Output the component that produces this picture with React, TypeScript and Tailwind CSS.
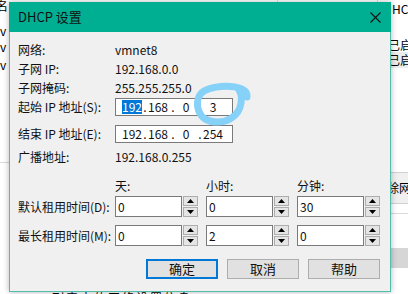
import React from "react";

function Up() {
  return (
    <svg width="7" height="4" viewBox="0 0 7 4"><path d="M0 4 L3.5 0 L7 4 Z" fill="#000" /></svg>
  );
}
function Down() {
  return (
    <svg width="7" height="4" viewBox="0 0 7 4"><path d="M0 0 L3.5 4 L7 0 Z" fill="#000" /></svg>
  );
}

function Spin({ value }: { value: string }) {
  return (
    <div className="flex w-[83px] h-[21px] gap-[1px]">
      <div className="flex-1 border border-[#7a7a7a] bg-white pl-[2px] leading-[19px]">{value}</div>
      <div className="flex flex-col w-[15px] gap-[1px]">
        <div className="flex-1 border border-[#adadad] bg-[#e5e5e5] flex items-center justify-center">
          <Up />
        </div>
        <div className="flex-1 border border-[#adadad] bg-[#e5e5e5] flex items-center justify-center">
          <Down />
        </div>
      </div>
    </div>
  );
}

function IpBox({ last, sel }: { last: string; sel?: boolean }) {
  return (
    <div className="w-[118px] h-[18px] border border-[#7a7a7a] bg-white flex items-center pl-[6px] whitespace-nowrap leading-[14px]">
      <span className={"w-[20px] text-center " + (sel ? "bg-[#0078d7] text-white" : "")}>192</span>
      <span className="w-[6px] text-center">.</span>
      <span className="w-[20px] text-center">168</span>
      <span className="w-[10px] text-center">.</span>
      <span className="w-[16px] text-center">0</span>
      <span className="w-[12px] text-center">.</span>
      <span className="w-[14px] flex justify-center">{last}</span>
    </div>
  );
}

export default function App() {
  return (
    <div className="relative w-[408px] h-[294px] overflow-hidden bg-white text-[12px] text-black whitespace-nowrap font-[family-name:Noto_Sans_CJK_SC,sans-serif]">
      {/* window behind */}
      <div className="absolute left-[-4px] top-[-2px] leading-[16px]">名</div>
      <div className="absolute left-[0px] top-[23px] leading-[16px]">v</div>
      <div className="absolute left-[0px] top-[39px] leading-[16px]">v</div>
      <div className="absolute left-[0px] top-[57px] leading-[16px]">v</div>
      <div className="absolute left-0 top-[162px] w-[10px] h-px bg-[#d9d9d9]" />
      <div className="absolute left-[277px] top-0 w-px h-[3px] bg-[#e0e0e0]" />
      <div className="absolute left-[377px] top-0 w-px h-[3px] bg-[#e0e0e0]" />
      <div className="absolute left-[392px] top-[1px] leading-[16px]">HCP</div>
      <div className="absolute left-[388px] top-[37px] leading-[16px]">已启</div>
      <div className="absolute left-[391px] top-[52px] w-[17px] h-[16px] bg-[#ececec]" />
      <div className="absolute left-[388px] top-[52px] leading-[16px]">已启</div>
      <div className="absolute left-[391px] top-[172px] w-[17px] h-[32px] border-t border-b border-[#d0d0d0] bg-[#f0f0f0]" />
      <div className="absolute left-[387px] top-[180px] leading-[16px]">除网</div>
      <div className="absolute left-[391px] top-[213px] w-[17px] h-px bg-[#d9d9d9]" />
      <div className="absolute left-[391px] top-[248px] w-[17px] h-[20px] bg-[#d6d6d6]" />
      <div className="absolute left-[52px] top-[290px] leading-[16px] tracking-[2px]">列表中的网络设置信息</div>

      {/* dialog */}
      <div className="absolute left-[9px] top-[2px] w-[382px] h-[290px] border border-[#52bda9] bg-[#f0f0f0] flex flex-col shadow-[0_0_6px_rgba(0,0,0,0.3)]">
        <div className="h-[30px] -mx-px -mt-px bg-[#00ae91] flex items-center justify-between pl-[9px] pr-[10px]">
          <span className="text-[13px] text-[#111]">DHCP 设置</span>
          <svg width="11" height="11" viewBox="0 0 11 11">
            <path d="M0.5 0.5 L10.5 10.5 M10.5 0.5 L0.5 10.5" stroke="#111" strokeWidth="1.1" />
          </svg>
        </div>
        <div className="relative flex flex-col pl-[8px] pr-[10px] pt-[8px] text-[#111]">
          <div className="flex h-[19px] items-center">
            <span className="w-[97px]">网络:</span>
            <span>vmnet8</span>
          </div>
          <div className="flex h-[19px] items-center">
            <span className="w-[97px]">子网 IP:</span>
            <span>192.168.0.0</span>
          </div>
          <div className="flex h-[19px] items-center">
            <span className="w-[97px]">子网掩码:</span>
            <span>255.255.255.0</span>
          </div>
          <div className="flex h-[18px] mt-[1px] items-center">
            <span className="w-[97px]">起始 IP 地址(S):</span>
            <IpBox last="3" sel />
          </div>
          <div className="flex h-[18px] mt-[9px] items-center">
            <span className="w-[97px]">结束 IP 地址(E):</span>
            <IpBox last="254" />
          </div>
          <div className="flex h-[19px] mt-[4px] items-center">
            <span className="w-[97px]">广播地址:</span>
            <span>192.168.0.255</span>
          </div>
          <div className="flex h-[19px] mt-[10px] items-center pl-[97px] gap-[8px]">
            <span className="w-[83px]">天:</span>
            <span className="w-[83px]">小时:</span>
            <span className="w-[83px]">分钟:</span>
          </div>
          <div className="flex h-[21px] mt-[1px] items-center">
            <span className="w-[97px]">默认租用时间(D):</span>
            <div className="flex gap-[8px]">
              <Spin value="0" />
              <Spin value="0" />
              <Spin value="30" />
            </div>
          </div>
          <div className="flex h-[21px] mt-[8px] items-center">
            <span className="w-[97px]">最长租用时间(M):</span>
            <div className="flex gap-[8px]">
              <Spin value="0" />
              <Spin value="2" />
              <Spin value="0" />
            </div>
          </div>
          <div className="flex mt-[13px] justify-end gap-[9px]">
            <button className="w-[72px] h-[20px] border-2 border-[#0078d7] bg-[#e1e1e1] text-[13px] leading-[16px]">确定</button>
            <button className="w-[72px] h-[20px] border border-[#adadad] bg-[#e1e1e1] text-[13px] leading-[18px]">取消</button>
            <button className="w-[72px] h-[20px] border border-[#adadad] bg-[#e1e1e1] text-[13px] leading-[18px]">帮助</button>
          </div>
        </div>
      </div>
      {/* hand-drawn circle */}
      <svg className="absolute left-0 top-0 pointer-events-none" width="408" height="294" viewBox="0 0 408 294">
        <path
          d="M247 97 C249 84 216 84 204 91 C194 97 195 117 210 121 C225 125 239 117 241 103 C242 97 241 93 239 90"
          fill="none"
          stroke="#86d1f7"
          strokeWidth="7"
          strokeLinecap="round"
        />
      </svg>
    </div>
  );
}
